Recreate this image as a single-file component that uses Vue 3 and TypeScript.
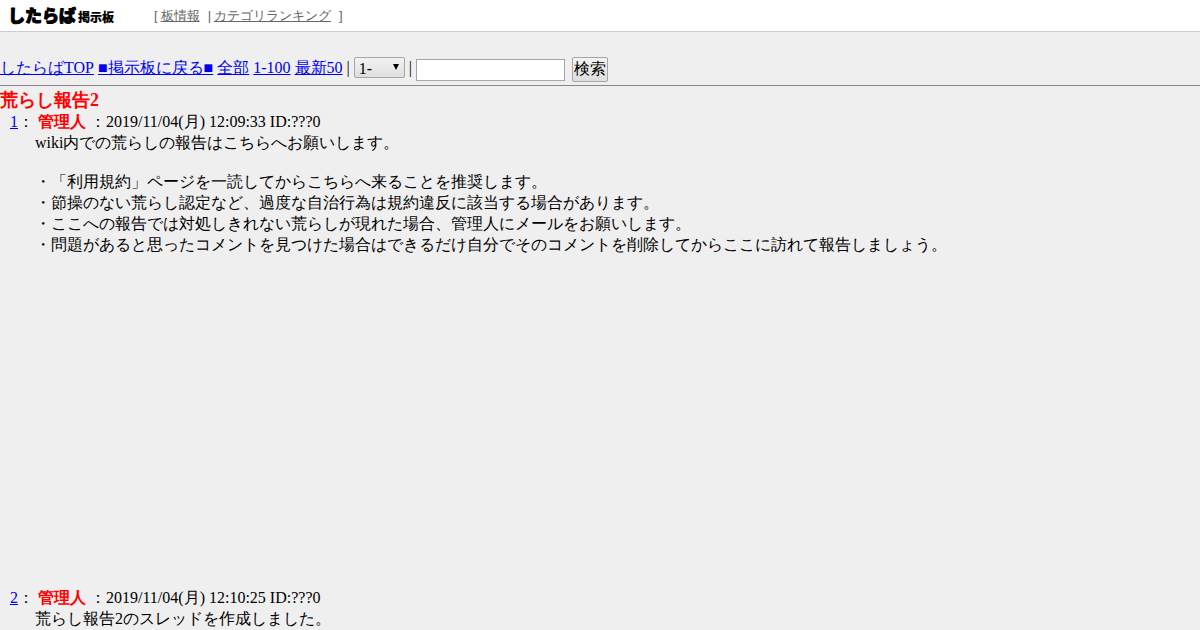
<script setup lang="ts">
import { ref } from 'vue'

interface Post {
  id: number
  name: string
  date: string
  paragraphs: string[][]
  adSpace: boolean
}

const range = ref('1-')
const keyword = ref('')

const posts: Post[] = [
  {
    id: 1,
    name: '管理人',
    date: '2019/11/04(月) 12:09:33 ID:???0',
    paragraphs: [
      ['wiki内での荒らしの報告はこちらへお願いします。'],
      [
        '・「利用規約」ページを一読してからこちらへ来ることを推奨します。',
        '・節操のない荒らし認定など、過度な自治行為は規約違反に該当する場合があります。',
        '・ここへの報告では対処しきれない荒らしが現れた場合、管理人にメールをお願いします。',
        '・問題があると思ったコメントを見つけた場合はできるだけ自分でそのコメントを削除してからここに訪れて報告しましょう。',
      ],
    ],
    adSpace: true,
  },
  {
    id: 2,
    name: '管理人',
    date: '2019/11/04(月) 12:10:25 ID:???0',
    paragraphs: [['荒らし報告2のスレッドを作成しました。']],
    adSpace: false,
  },
]
</script>

<template>
  <div class="page">
    <header class="site-header">
      <a class="logo" href="#" aria-label="したらば掲示板">
        <svg width="108" height="30" viewBox="0 0 108 30" aria-hidden="true">
          <g fill="#000" stroke="#000" stroke-linejoin="round">
            <text class="brand" x="0" y="21" stroke-width="1">したらば</text>
            <text class="brand-sub" x="70" y="21" stroke-width="0.2">掲示板</text>
          </g>
        </svg>
      </a>
      <nav class="site-nav">
        <span>[</span>
        <a class="info" href="#">板情報</a>
        <span>|</span>
        <a href="#">カテゴリランキング</a>
        <span class="close">]</span>
      </nav>
    </header>

    <form class="toolbar" @submit.prevent>
      <a href="#">したらばTOP</a>
      <a href="#">■掲示板に戻る■</a>
      <a href="#">全部</a>
      <a href="#">1-100</a>
      <a href="#">最新50</a>
      <span>|</span>
      <span class="picker">
        <select v-model="range" aria-label="表示範囲">
          <option>1-</option>
          <option>101-</option>
        </select>
        <svg class="arrow" width="6" height="6" viewBox="0 0 6 6" aria-hidden="true"><path d="M0 0H6L3 6Z" /></svg>
      </span>
      <span>|</span>
      <input v-model="keyword" type="text" aria-label="検索語" />
      <button type="submit">検索</button>
    </form>

    <main>
      <h1>荒らし報告2</h1>
      <article v-for="post in posts" :key="post.id">
        <div class="post-head">
          <a href="#">{{ post.id }}</a>： <b>{{ post.name }}</b> ：{{ post.date }}
        </div>
        <div class="post-body">
          <div v-for="(lines, i) in post.paragraphs" :key="i" class="paragraph">
            <div v-for="line in lines" :key="line">{{ line }}</div>
          </div>
        </div>
        <div v-if="post.adSpace" class="ad-space"></div>
      </article>
    </main>
  </div>
</template>

<style>
html,
body {
  margin: 0;
  background: #efefef;
}
</style>

<style scoped>
.page {
  color: #000;
  font-family: "Liberation Serif", serif;
  font-size: 16px;
  line-height: 21px;
  text-spacing-trim: space-all;
  overflow-x: hidden;
}
a {
  color: #0000ee;
}
.site-header {
  display: flex;
  align-items: center;
  gap: 38px;
  height: 31px;
  padding-left: 8px;
  background: #fff;
  border-bottom: 1px solid #ccc;
}
.logo {
  display: flex;
}
.brand {
  font: 900 17px "Noto Sans CJK JP", sans-serif;
}
.brand-sub {
  font: 900 12px "Noto Sans CJK JP", sans-serif;
}
.site-nav {
  display: flex;
  gap: 3px;
  color: #666;
  font-family: "Liberation Sans", sans-serif;
  font-size: 13px;
}
.site-nav a {
  color: #666;
}
.info {
  margin-right: 5px;
}
.close {
  margin-left: 5px;
}
.toolbar {
  display: flex;
  align-items: center;
  gap: 4px;
  height: 36px;
  padding: 17px 0 0;
  border-bottom: 1px solid #888;
  white-space: nowrap;
}
.picker {
  position: relative;
  display: flex;
}
select {
  appearance: none;
  width: 51px;
  height: 21px;
  padding: 0 4px;
  border: 1px solid #a6a6a6;
  border-radius: 2px;
  background: linear-gradient(#f3f3f3, #dedede);
  color: #000;
  font: inherit;
}
.arrow {
  position: absolute;
  top: 7px;
  right: 6px;
  pointer-events: none;
}
input {
  box-sizing: border-box;
  width: 149px;
  height: 22px;
  margin: 5px 3px 0 0;
  padding: 1px;
  border: 1px solid #a6a6a6;
  background: #fff;
  font: inherit;
}
button {
  box-sizing: border-box;
  height: 25px;
  margin-top: 5px;
  padding: 0 1px 2px;
  border: 1px solid #a6a6a6;
  border-radius: 2px;
  background: linear-gradient(#f3f3f3, #dedede);
  color: #000;
  font: inherit;
}
h1 {
  margin: 3px 0 0;
  color: #f00;
  font-size: 18px;
  line-height: 22px;
}
.post-head {
  padding-left: 10px;
}
.post-head b {
  color: #f00;
}
.post-body {
  padding-left: 35px;
}
.paragraph + .paragraph {
  margin-top: 18px;
}
.ad-space {
  height: 332px;
}
</style>
